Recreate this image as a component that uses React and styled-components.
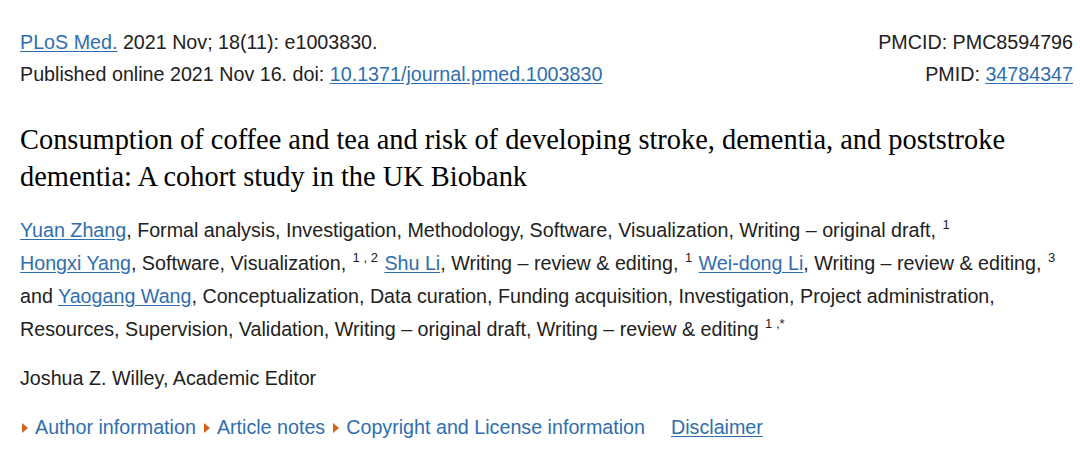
import React from "react";
import styled, { createGlobalStyle } from "styled-components";

const Global = createGlobalStyle`
  body {
    margin: 0;
    background: #fff;
    font-family: "Liberation Sans", Arial, sans-serif;
    color: #212121;
  }
`;

const Page = styled.div`
  width: 1080px;
  height: 472px;
  padding: 26px 7px 0 20px;
  box-sizing: border-box;
  font-size: 19.7px;
`;

const Citation = styled.div`
  display: flex;
  justify-content: space-between;
  line-height: 32px;
`;

const Column = styled.div`
  display: flex;
  flex-direction: column;
  align-items: ${(p) => (p.$right ? "flex-end" : "flex-start")};
`;

const A = styled.a`
  color: #2f6eae;
  text-decoration: underline;
  text-underline-offset: 2px;
`;

const Title = styled.h1`
  font-family: "Liberation Serif", "Times New Roman", serif;
  font-weight: normal;
  font-size: 28.4px;
  line-height: 37px;
  color: #000;
  margin: 31px 0 0;
  max-width: 1050px;
`;

const Authors = styled.p`
  margin: 19px 0 0;
  line-height: 33px;
`;

const Sup = styled.sup`
  font-size: 13px;
  line-height: 0;
  vertical-align: 8px;
  margin: 0 1px;
`;

const Editor = styled.p`
  margin: 16px 0 0;
  line-height: 33px;
`;

const Links = styled.div`
  display: flex;
  align-items: center;
  margin-top: 16px;
  padding-left: 2px;
  line-height: 33px;
`;

const Toggle = styled.span`
  display: inline-flex;
  align-items: center;
  color: #2f6eae;
  margin-right: 8px;

  &::before {
    content: "";
    width: 0;
    height: 0;
    border-top: 5.5px solid transparent;
    border-bottom: 5.5px solid transparent;
    border-left: 6px solid #d0641f;
    margin-right: 7px;
  }
`;

const Disclaimer = styled(A)`
  margin-left: 18px;
`;

export default function App() {
  return (
    <Page>
      <Global />
      <Citation>
        <Column>
          <span>
            <A href="#">PLoS Med.</A> 2021 Nov; 18(11): e1003830.
          </span>
          <span>
            Published online 2021 Nov 16. doi:{" "}
            <A href="#">10.1371/journal.pmed.1003830</A>
          </span>
        </Column>
        <Column $right>
          <span>PMCID: PMC8594796</span>
          <span>
            PMID: <A href="#">34784347</A>
          </span>
        </Column>
      </Citation>

      <Title>
        Consumption of coffee and tea and risk of developing stroke, dementia, and poststroke
        dementia: A cohort study in the UK Biobank
      </Title>

      <Authors>
        <A href="#">Yuan Zhang</A>, Formal analysis, Investigation, Methodology, Software,
        Visualization, Writing – original draft, <Sup>1</Sup>
        <br />
        <A href="#">Hongxi Yang</A>, Software, Visualization, <Sup>1 , 2</Sup>{" "}
        <A href="#">Shu Li</A>, Writing – review &amp; editing, <Sup>1</Sup>{" "}
        <A href="#">Wei-dong Li</A>, Writing – review &amp; editing, <Sup>3</Sup>
        <br />
        and <A href="#">Yaogang Wang</A>, Conceptualization, Data curation, Funding acquisition,
        Investigation, Project administration,
        <br />
        Resources, Supervision, Validation, Writing – original draft, Writing – review &amp;
        editing <Sup>1 ,*</Sup>
      </Authors>

      <Editor>Joshua Z. Willey, Academic Editor</Editor>

      <Links>
        <Toggle>Author information</Toggle>
        <Toggle>Article notes</Toggle>
        <Toggle>Copyright and License information</Toggle>
        <Disclaimer href="#">Disclaimer</Disclaimer>
      </Links>
    </Page>
  );
}
